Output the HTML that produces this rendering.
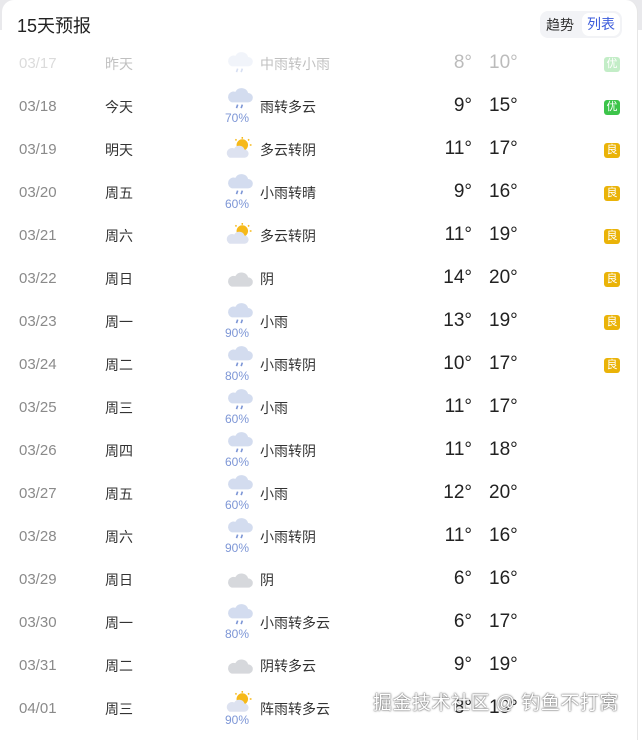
<!DOCTYPE html>
<html><head><meta charset="utf-8"><style>
*{margin:0;padding:0;box-sizing:border-box}
body{width:642px;height:732px;background:#fff;font-family:"Liberation Sans","Noto Sans CJK SC",sans-serif;overflow:hidden;position:relative}
.bg{position:absolute;left:0;top:0;width:642px;height:30px;background:#e9e9ec}
.card{position:absolute;left:2px;top:0;width:636px;height:740px;background:#fff;border-radius:12px 12px 0 0;border-right:1px solid #e6e6e6}
.title{position:absolute;left:17px;top:12px;font-size:18px;color:#222}
.tog{position:absolute;left:540px;top:11px;width:82px;height:27px;background:#f2f3f6;border-radius:8px}
.tog span{position:absolute;top:4px;font-size:14px}
.tog .a{left:6px;color:#333}
.tog .b{left:42px;width:38px;height:23px;top:2px;background:#fff;border-radius:7px;color:#3b5bdb;text-align:center;line-height:23px}
.row{position:absolute;left:0;width:642px;height:43px}
.d{position:absolute;left:19px;top:-9px;font-size:15px;color:#8a8a8a}
.w{position:absolute;left:105px;top:-10px;font-size:14px;color:#333}
.ds{position:absolute;left:260px;top:-10px;font-size:14px;color:#333}
.lo{position:absolute;right:170px;top:-12px;font-size:19px;color:#222}
.hi{position:absolute;left:489px;top:-12px;font-size:19px;color:#222}
.bd{position:absolute;left:604px;top:-7px;width:16px;height:15px;border-radius:3px;font-size:11px;color:#fff;text-align:center;line-height:15px}
.g{background:#3cc44a}.y{background:#eab308}
.ic{position:absolute;left:226px}
.pc{position:absolute;left:225px;top:4px;font-size:12px;color:#7d96d6}
.faded{opacity:.3}
.wm{position:absolute;left:373px;top:688px;font-size:19px;color:#fff;text-shadow:0 0 2px #666,0 0 1px #444;letter-spacing:0.5px}
</style></head><body>
<div class="bg"></div>
<div class="card"></div>
<div class="title">15天预报</div>
<div class="tog"><span class="a">趋势</span><span class="b">列表</span></div>
<svg width="0" height="0" style="position:absolute">
<defs>
<symbol id="cl" viewBox="0 0 24 18"><path d="M5 16h14a4 4 0 0 0 0-8a6 6 0 0 0-11-1a4.5 4.5 0 0 0-3 9z" fill="#d6d8dc"/></symbol>
<symbol id="rn" viewBox="0 0 24 24"><path d="M5 14h14a4 4 0 0 0 0-8a6 6 0 0 0-11-1a4.5 4.5 0 0 0-3 9z" fill="#d3dcef"/><path d="M10 16l-1 3M14 16l-1 3" stroke="#7d96d6" stroke-width="1.4"/></symbol>
<symbol id="sc" viewBox="0 0 24 20"><circle cx="14" cy="7" r="5" fill="#f6b91a"/><g stroke="#f6b91a" stroke-width="1.3"><path d="M14 0v1.5M20 2l-1 1M22 7h-1.5M8 2l1 1"/></g><path d="M3 18h13a3.5 3.5 0 0 0 0-7a5 5 0 0 0-9-1a4 4 0 0 0-4 8z" fill="#dde2f0"/></symbol>
</defs></svg>
<div id="rows"></div>
<div class="wm">掘金技术社区 @ 钓鱼不打窝</div>
<script>
var R=[["03/17","昨天","rn0","中雨转小雨","8°","10°","g","优"],
["03/18","今天","rn70","雨转多云","9°","15°","g","优"],
["03/19","明天","sc","多云转阴","11°","17°","y","良"],
["03/20","周五","rn60","小雨转晴","9°","16°","y","良"],
["03/21","周六","sc","多云转阴","11°","19°","y","良"],
["03/22","周日","cl","阴","14°","20°","y","良"],
["03/23","周一","rn90","小雨","13°","19°","y","良"],
["03/24","周二","rn80","小雨转阴","10°","17°","y","良"],
["03/25","周三","rn60","小雨","11°","17°"],
["03/26","周四","rn60","小雨转阴","11°","18°"],
["03/27","周五","rn60","小雨","12°","20°"],
["03/28","周六","rn90","小雨转阴","11°","16°"],
["03/29","周日","cl","阴","6°","16°"],
["03/30","周一","rn80","小雨转多云","6°","17°"],
["03/31","周二","cl","阴转多云","9°","19°"],
["04/01","周三","sc90","阵雨转多云","8°","19°"]];
var h="";
R.forEach(function(r,i){
 var y=64+43*i, ic="";
 var t=r[2];
 if(t=="cl") ic='<svg class="ic" style="top:-11px" width="28" height="21"><use href="#cl"/></svg>';
 else if(t=="sc") ic='<svg class="ic" style="top:-13px" width="28" height="23"><use href="#sc"/></svg>';
 else if(t=="sc90") ic='<svg class="ic" style="top:-18px" width="28" height="23"><use href="#sc"/></svg><div class="pc">90%</div>';
 else if(t=="rn0") ic='<svg class="ic" style="top:-14px" width="28" height="28"><use href="#rn"/></svg>';
 else ic='<svg class="ic" style="top:-21px" width="28" height="28"><use href="#rn"/></svg><div class="pc">'+t.slice(2)+'%</div>';
 h+='<div class="row'+(i==0?' faded':'')+'" style="top:'+y+'px"><div class="d">'+r[0]+'</div><div class="w">'+r[1]+'</div>'+ic+'<div class="ds">'+r[3]+'</div><div class="lo">'+r[4]+'</div><div class="hi">'+r[5]+'</div>'+(r[6]?'<div class="bd '+r[6]+'">'+r[7]+'</div>':'')+'</div>';
});
document.getElementById("rows").innerHTML=h;
</script>
</body></html>
